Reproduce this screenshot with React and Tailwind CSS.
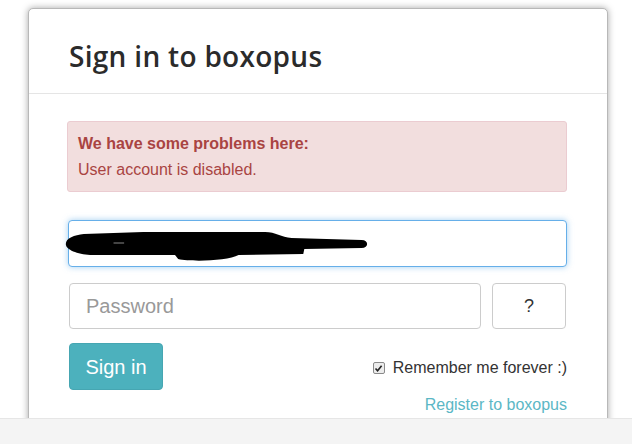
import React from 'react';

const sans = "font-['Liberation_Sans',Arial,sans-serif]";

const Redaction = () => (
  <svg
    className="absolute left-0 top-0 overflow-visible pointer-events-none"
    width="318"
    height="47"
    viewBox="0 0 300 47"
    preserveAspectRatio="none"
  >
    <path
      d="M -3 23 C -3 17 5 14 14 13 L 70 11 L 185 11 C 195 11 200 16 210 17 L 276 19 C 283 19 283 27 276 27 L 222 28 L 221 33 L 160 34 C 150 40 115 41 103 38 L 100 34 L 20 34 C 8 33 -3 29 -3 23 Z"
      fill="#000"
    />
    <line x1="42" y1="22" x2="52" y2="22" stroke="#888" strokeWidth="1" />
  </svg>
);

export default function App() {
  return (
    <div className={`h-[444px] w-[632px] bg-white flex flex-col overflow-hidden ${sans}`}>
      <div className="flex-1 min-h-0 pl-[28px] pt-[8px]">
        <div className="w-[580px] h-[420px] bg-white border border-[#b8b8b8] rounded-[5px] shadow-[0_0_7px_rgba(0,0,0,0.35)]">
          <div className="h-[85px] border-b border-[#e5e5e5] pl-[40px] pt-[29px]">
            <h1 className="text-[28px] leading-[36px] font-semibold tracking-[0.3px] text-[#2b2b2b] font-['Open_Sans',sans-serif]">
              Sign in to boxopus
            </h1>
          </div>

          <div className="pl-[38px] pr-[40px] pt-[27px]">
            <div className="w-[500px] h-[71px] bg-[#f2dede] border border-[#ebccd1] rounded-[3px] px-[10px] pt-[11px] text-[#a94442]">
              <div className="text-[16px] leading-[22px] font-bold">We have some problems here:</div>
              <div className="text-[16px] leading-[30px]">User account is disabled.</div>
            </div>

            <div className="relative mt-[28px] ml-[1px] w-[499px] h-[47px] border border-[#66afe9] rounded-[4px] shadow-[0_0_6px_rgba(102,175,233,0.6)] bg-white">
              <Redaction />
            </div>

            <div className="mt-[16px] ml-[2px] flex gap-[11px]">
              <div className="w-[412px] h-[46px] border border-[#ccc] rounded-[4px] flex items-center pl-[16px] text-[20px] text-[#999]">
                Password
              </div>
              <div className="w-[74px] h-[46px] border border-[#ccc] rounded-[4px] flex items-center justify-center text-[18px] text-[#333]">
                ?
              </div>
            </div>

            <div className="mt-[14px] ml-[2px] flex items-start justify-between w-[498px]">
              <div className="w-[94px] h-[47px] rounded-[4px] bg-[#4cb1bd] border border-[#46a6b2] flex items-center justify-center text-white text-[20px]">
                Sign in
              </div>
              <div className="flex flex-col items-end">
                <div className="flex items-center mt-[13px] text-[16px] text-[#333]">
                  <span className="w-[12px] h-[12px] border border-[#8a8a8a] rounded-[2px] bg-[#ececec] flex items-center justify-center mr-[8px]">
                    <svg width="9" height="9" viewBox="0 0 9 9">
                      <path d="M1.5 4.5 L3.6 6.8 L7.6 1.8" stroke="#222" strokeWidth="1.6" fill="none" />
                    </svg>
                  </span>
                  Remember me forever :)
                </div>
                <div className="mt-[13px] text-[16px] text-[#5bb7c5]">Register to boxopus</div>
              </div>
            </div>
          </div>
        </div>
      </div>
      <div className="h-[26px] shrink-0 bg-[#f4f4f4] border-t border-[#e6e6e6]" />
    </div>
  );
}
